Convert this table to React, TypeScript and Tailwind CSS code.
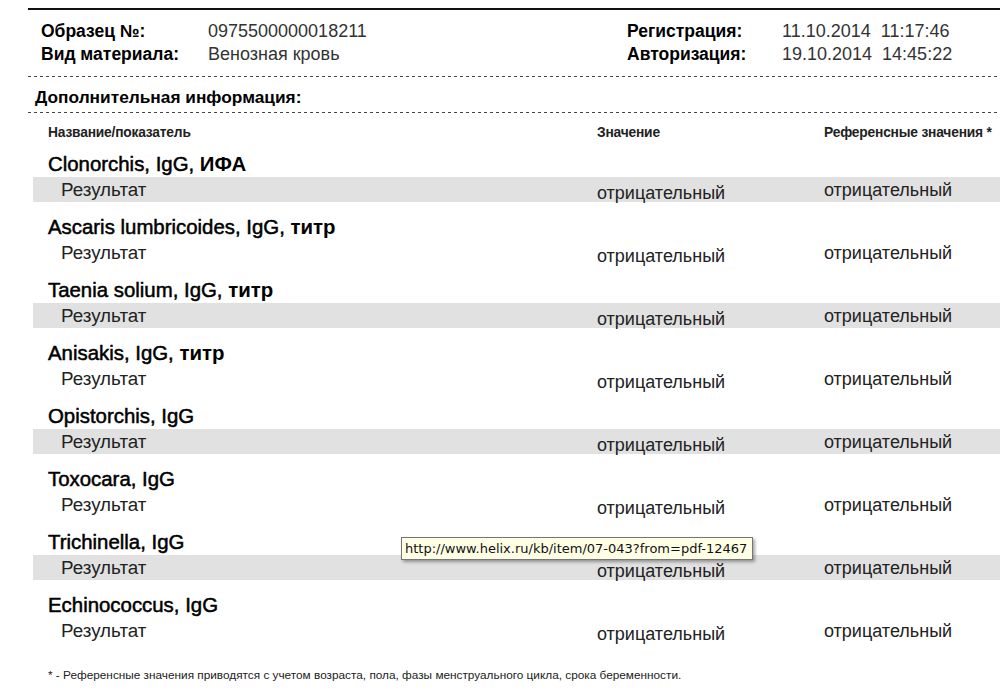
const groups = [
  { latin: 'Clonorchis, IgG, ', bold: 'ИФА' },
  { latin: 'Ascaris lumbricoides, IgG, ', bold: 'титр' },
  { latin: 'Taenia solium, IgG, ', bold: 'титр' },
  { latin: 'Anisakis, IgG, ', bold: 'титр' },
  { latin: 'Opistorchis, IgG', bold: '' },
  { latin: 'Toxocara, IgG', bold: '' },
  { latin: 'Trichinella, IgG', bold: '' },
  { latin: 'Echinococcus, IgG', bold: '' },
]

function Dashed() {
  return <div className="h-px bg-[repeating-linear-gradient(to_right,#444_0_3px,transparent_3px_6px)]" />
}

export default function App() {
  return (
    <div className="relative w-[1000px] h-[692px] overflow-hidden bg-white font-['Liberation_Sans',Arial,sans-serif] text-[#1c1c1c]">
      <div className="pl-[28px] pt-[8px]">
        <div className="h-[2px] bg-[#111]" />

        {/* Header */}
        <div className="pt-[10px] flex text-[17.5px] leading-[23px]">
          <div className="pl-[13px] w-[180px] font-bold text-black">
            <div>Образец №:</div>
            <div>Вид материала:</div>
          </div>
          <div className="w-[419px] text-[18px] text-[#333]">
            <div>0975500000018211</div>
            <div>Венозная кровь</div>
          </div>
          <div className="w-[155px] font-bold text-black">
            <div>Регистрация:</div>
            <div>Авторизация:</div>
          </div>
          <div className="text-[18px] text-[#333] whitespace-pre">
            <div>11.10.2014  11:17:46</div>
            <div>19.10.2014  14:45:22</div>
          </div>
        </div>

        <div className="mt-[10px]">
          <Dashed />
        </div>
        <div className="h-[35px] pt-[7px] pl-[7px] flex items-center text-[17.3px] font-bold text-black">
          Дополнительная информация:
        </div>
        <Dashed />

        {/* Column headers */}
        <div className="h-[27px] pt-[14px] flex items-center text-[13.8px] font-bold text-[#222] tracking-[-0.2px]">
          <div className="pl-[20px] w-[569px]">Название/показатель</div>
          <div className="w-[227px]">Значение</div>
          <div className="whitespace-nowrap">Референсные значения *</div>
        </div>

        {/* Groups */}
        <div className="pl-[5px]">
          {groups.map((g, i) => (
            <div key={i} className="h-[63px]">
              <div className="h-[37px] pl-[15px] pb-[2px] flex items-end text-[20.4px] leading-[22px] text-black whitespace-pre">
                <span className="[-webkit-text-stroke:0.5px_#000]">{g.latin}</span>
                {g.bold && <span className="font-bold">{g.bold}</span>}
              </div>
              <div
                className={
                  'h-[25px] flex items-center text-[18px] text-[#222] ' +
                  (i % 2 === 0 ? 'bg-[#e1e1e1]' : '')
                }
              >
                <div className="pl-[28px] w-[564px] pt-[2px] text-[18.8px]">Результат</div>
                <div className="w-[227px] pt-[7px]">отрицательный</div>
                <div className="pt-[1px]">отрицательный</div>
              </div>
            </div>
          ))}
        </div>

        {/* Footer */}
        <div className="mt-[24px] pl-[20px] text-[11.8px] leading-[14px] text-[#222]">
          * - Референсные значения приводятся с учетом возраста, пола, фазы менструального цикла, срока беременности.
        </div>
      </div>

      {/* Tooltip */}
      <div className="absolute left-[401px] top-[537px] h-[23px] w-[352px] px-[3px] flex items-center border border-[#767676] bg-[#ffffe6] shadow-[2px_2px_3px_rgba(0,0,0,0.35)] font-['DejaVu_Sans',Tahoma,sans-serif] text-[13px] text-[#111] whitespace-nowrap">
        http://www.helix.ru/kb/item/07-043?from=pdf-12467
      </div>
    </div>
  )
}
